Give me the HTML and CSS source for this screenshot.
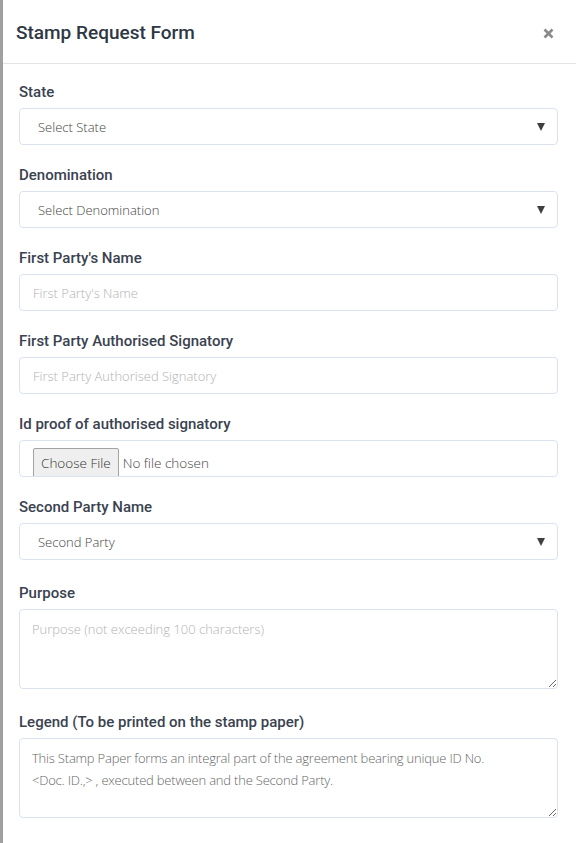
FILE: index.html
```html
<!DOCTYPE html>
<html lang="en">
<head>
<meta charset="utf-8">
<title>Stamp Request Form</title>
<link rel="stylesheet" href="styles.css">
</head>
<body>
<div class="page">
  <div class="backdrop-edge"></div>
  <div class="modal">
    <div class="modal-header">
      <h2 class="modal-title">Stamp Request Form</h2>
      <button class="close-btn" type="button" aria-label="Close">
        <svg width="11" height="11" viewBox="0 0 11 11"><path d="M1.5 1.5 L9.5 9.5 M9.5 1.5 L1.5 9.5" stroke="#8a8a8a" stroke-width="2.6" stroke-linecap="butt"/></svg>
      </button>
    </div>
    <form class="modal-body">
      <div class="field">
        <label class="field-label">State</label>
        <div class="select-wrap">
          <select class="control select"><option>Select State</option></select>
          <span class="caret"></span>
        </div>
      </div>
      <div class="field">
        <label class="field-label">Denomination</label>
        <div class="select-wrap">
          <select class="control select"><option>Select Denomination</option></select>
          <span class="caret"></span>
        </div>
      </div>
      <div class="field">
        <label class="field-label">First Party's Name</label>
        <input class="control" type="text" placeholder="First Party's Name">
      </div>
      <div class="field">
        <label class="field-label">First Party Authorised Signatory</label>
        <input class="control" type="text" placeholder="First Party Authorised Signatory">
      </div>
      <div class="field">
        <label class="field-label">Id proof of authorised signatory</label>
        <div class="control file-control">
          <span class="file-btn">Choose File</span>
          <span class="file-name">No file chosen</span>
        </div>
      </div>
      <div class="field">
        <label class="field-label">Second Party Name</label>
        <div class="select-wrap">
          <select class="control select"><option>Second Party</option></select>
          <span class="caret"></span>
        </div>
      </div>
      <div class="field field-tall">
        <label class="field-label">Purpose</label>
        <textarea class="control textarea" placeholder="Purpose (not exceeding 100 characters)"></textarea>
      </div>
      <div class="field field-tall">
        <label class="field-label">Legend (To be printed on the stamp paper)</label>
        <textarea class="control textarea legend">This Stamp Paper forms an integral part of the agreement bearing unique ID No. &lt;Doc. ID.,&gt; , executed between and the Second Party.</textarea>
      </div>
    </form>
  </div>
</div>
</body>
</html>
```

FILE: styles.css
```css
* { box-sizing: border-box; }
html, body { margin: 0; padding: 0; background: #fff; }
body { font-family: Roboto, "Noto Sans", sans-serif; }

.page {
  display: flex;
  min-height: 843px;
}
.backdrop-edge {
  width: 3px;
  background: #a0a0a0;
  flex: none;
}
.modal {
  flex: 1;
  background: #fff;
}
.modal-header {
  height: 64px;
  border-bottom: 1px solid #e3e3e3;
  display: flex;
  align-items: center;
  justify-content: space-between;
  padding: 0 22px 0 13px;
}
.modal-title {
  margin: 0;
  font-size: 19px;
  font-weight: 500;
  color: #2e3744;
  padding-top: 2px;
}
.close-btn {
  border: 0;
  background: none;
  padding: 0;
  display: flex;
  margin-top: 4px;
  cursor: pointer;
}
.modal-body {
  padding: 18px 18px 0 16px;
  display: flex;
  flex-direction: column;
  gap: 20px;
}
.field {
  display: flex;
  flex-direction: column;
  gap: 6px;
}
.field-tall { margin-top: 3px; }
.field-label {
  font-size: 15px;
  font-weight: 500;
  line-height: 20px;
  color: #3a4250;
}
.control {
  width: 100%;
  height: 37px;
  border: 1px solid #dce2ed;
  border-radius: 4px;
  background: #fff;
  font-family: "Open Sans", sans-serif;
  font-size: 13px;
  font-weight: 300;
  color: #444;
  padding: 0 13px;
  margin: 0;
  outline: none;
}
.control::placeholder { color: #b3b3b3; font-weight: 300; }
.select-wrap { position: relative; }
.select {
  appearance: none;
  -webkit-appearance: none;
  padding-left: 18px;
}
.caret {
  position: absolute;
  right: 13px;
  top: 15px;
  width: 0;
  height: 0;
  border-left: 4.5px solid transparent;
  border-right: 4.5px solid transparent;
  border-top: 8px solid #3f3f3f;
  pointer-events: none;
}
.file-control {
  display: flex;
  align-items: flex-start;
  padding: 7px 13px 0;
  overflow: hidden;
  gap: 4px;
}
.file-btn {
  height: 34px;
  padding: 4px 7px 0;
  background: #efefef;
  border: 1px solid #a3a3a3;
  border-radius: 2px;
  font-size: 13.5px;
  color: #333;
  line-height: 20px;
}
.file-name {
  font-size: 13.5px;
  color: #444;
  line-height: 30px;
}
.textarea {
  height: 80px;
  resize: vertical;
  padding: 8px 16px 8px 12px;
  line-height: 22px;
}
.legend {
  color: #666;
  font-size: 13px;
  letter-spacing: -0.2px;
  font-weight: 300;
  padding-right: 44px;
}
```
